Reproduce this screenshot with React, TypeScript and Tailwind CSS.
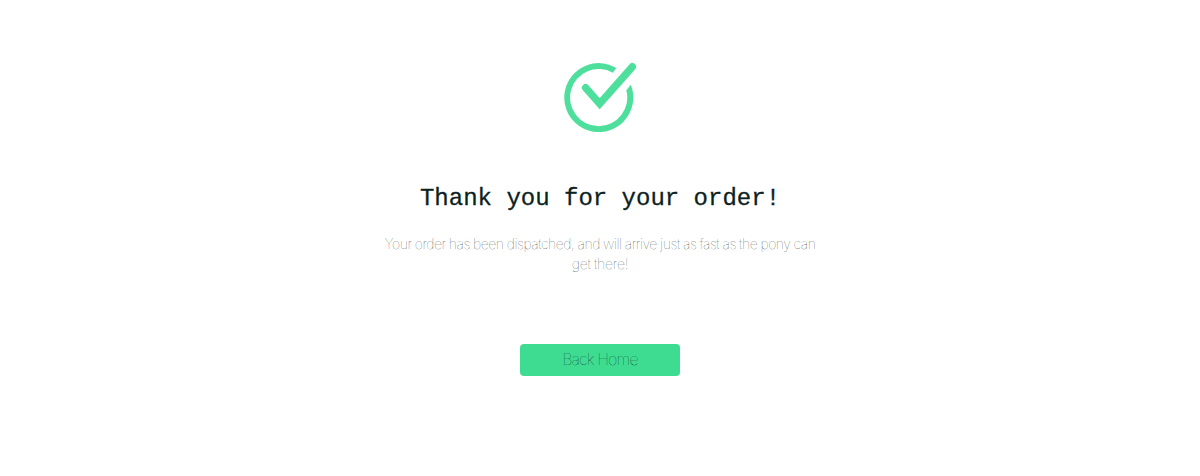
export default function App() {
  return (
    <main className="flex h-[476px] w-full flex-col items-center bg-white pt-[60px]">
      <svg width="80" height="76" viewBox="560 60 80 76" fill="none" aria-hidden="true">
        <path
          d="M616.3 67.9A34.5 34.5 0 1 0 630.8 84.8L626.3 90.2A28.6 28.6 0 1 1 612.8 72.7Z"
          fill="#4fdf9c"
        />
        <path
          d="M585.6 87.7L599.7 103.6L632.4 66.7"
          stroke="#4fdf9c"
          strokeWidth="7.4"
          strokeLinecap="round"
        />
      </svg>
      <h1 className="mt-[47px] h-8 whitespace-pre text-[24px] leading-8 text-[#0d1f1f] [font-family:'Liberation_Mono',monospace] [-webkit-text-stroke:0.3px_#0d1f1f]">
        Thank you for your order!
      </h1>
      <p className="mt-[19px] w-[440px] text-center text-[14px] font-thin leading-5 tracking-[-0.46px] [word-spacing:-0.25px] text-[#0d1f1f]/80 [font-family:Inter,sans-serif]">
        Your order has been dispatched, and will arrive just as fast as the pony can
        <br />
        <span className="tracking-[-0.25px]">get there!</span>
      </p>
      <button className="mt-[70px] h-8 w-40 rounded bg-[#3ddc91] pb-0.5 text-[16px] font-thin leading-[30px] tracking-[-0.9px] text-[#0d1f1f]/85 [font-family:Inter,sans-serif]">
        Back Home
      </button>
    </main>
  );
}
